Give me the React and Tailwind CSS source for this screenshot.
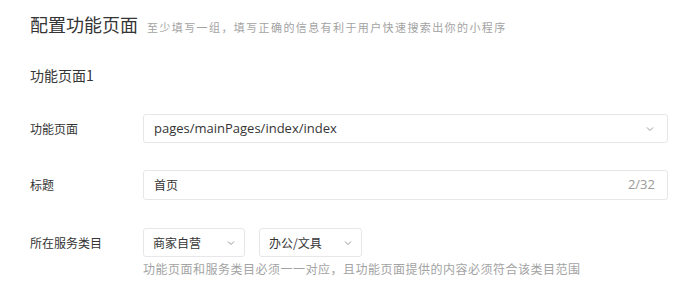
import React from 'react';

const Chevron = () => (
  <svg width="10" height="10" viewBox="0 0 10 10" fill="none" stroke="#9a9a9a" strokeWidth="1">
    <path d="M2 3.5 L5 6.5 L8 3.5" />
  </svg>
);

const Row = ({ label, children, className = '' }) => (
  <div className={`flex items-start ${className}`}>
    <div className="w-[113px] shrink-0 text-[12px] text-[#353535] leading-[30px]">{label}</div>
    <div className="flex-1">{children}</div>
  </div>
);

const App = () => {
  return (
    <div
      className="w-[698px] h-[297px] bg-white pl-[30px] pr-[30px] pt-[12px]"
      style={{ fontFamily: '"Noto Sans CJK SC", "Noto Sans", sans-serif' }}
    >
      <div className="flex items-baseline h-[24px]">
        <h2 className="text-[18px] text-[#353535] font-normal leading-[24px]">配置功能页面</h2>
        <span className="ml-[9px] text-[11px] tracking-[1.4px] text-[#a3a3a3]">至少填写一组，填写正确的信息有利于用户快速搜索出你的小程序</span>
      </div>

      <div className="mt-[29px] text-[14px] text-[#353535] leading-[20px]">功能页面1</div>

      <Row label="功能页面" className="mt-[29px]">
        <div className="h-[29px] w-[525px] border border-[#e7e7eb] rounded-[3px] flex items-center justify-between pl-[10px] pr-[12px]">
          <span className="text-[13px] text-[#353535]" style={{ fontFamily: '"Open Sans", "Noto Sans CJK SC", sans-serif' }}>
            pages/mainPages/index/index
          </span>
          <Chevron />
        </div>
      </Row>

      <Row label="标题" className="mt-[26px]">
        <div className="h-[30px] w-[525px] border border-[#e7e7eb] rounded-[3px] flex items-center justify-between pl-[10px] pr-[12px]">
          <span className="text-[12px] text-[#353535]">首页</span>
          <span className="text-[13px] text-[#9a9a9a]" style={{ fontFamily: '"Open Sans", sans-serif' }}>2/32</span>
        </div>
      </Row>

      <Row label="所在服务类目" className="mt-[28px]">
        <div className="flex gap-[14px]">
          <div className="h-[29px] w-[102px] border border-[#e7e7eb] rounded-[3px] flex items-center justify-between pl-[9px] pr-[8px]">
            <span className="text-[12px] text-[#353535]">商家自营</span>
            <Chevron />
          </div>
          <div className="h-[29px] w-[103px] border border-[#e7e7eb] rounded-[3px] flex items-center justify-between pl-[9px] pr-[8px]">
            <span className="text-[12px] text-[#353535]">办公/文具</span>
            <Chevron />
          </div>
        </div>
        <div className="mt-[4px] text-[12px] tracking-[0.5px] text-[#a3a3a3] leading-[16px]">
          功能页面和服务类目必须一一对应，且功能页面提供的内容必须符合该类目范围
        </div>
      </Row>
    </div>
  );
};

export default App;
